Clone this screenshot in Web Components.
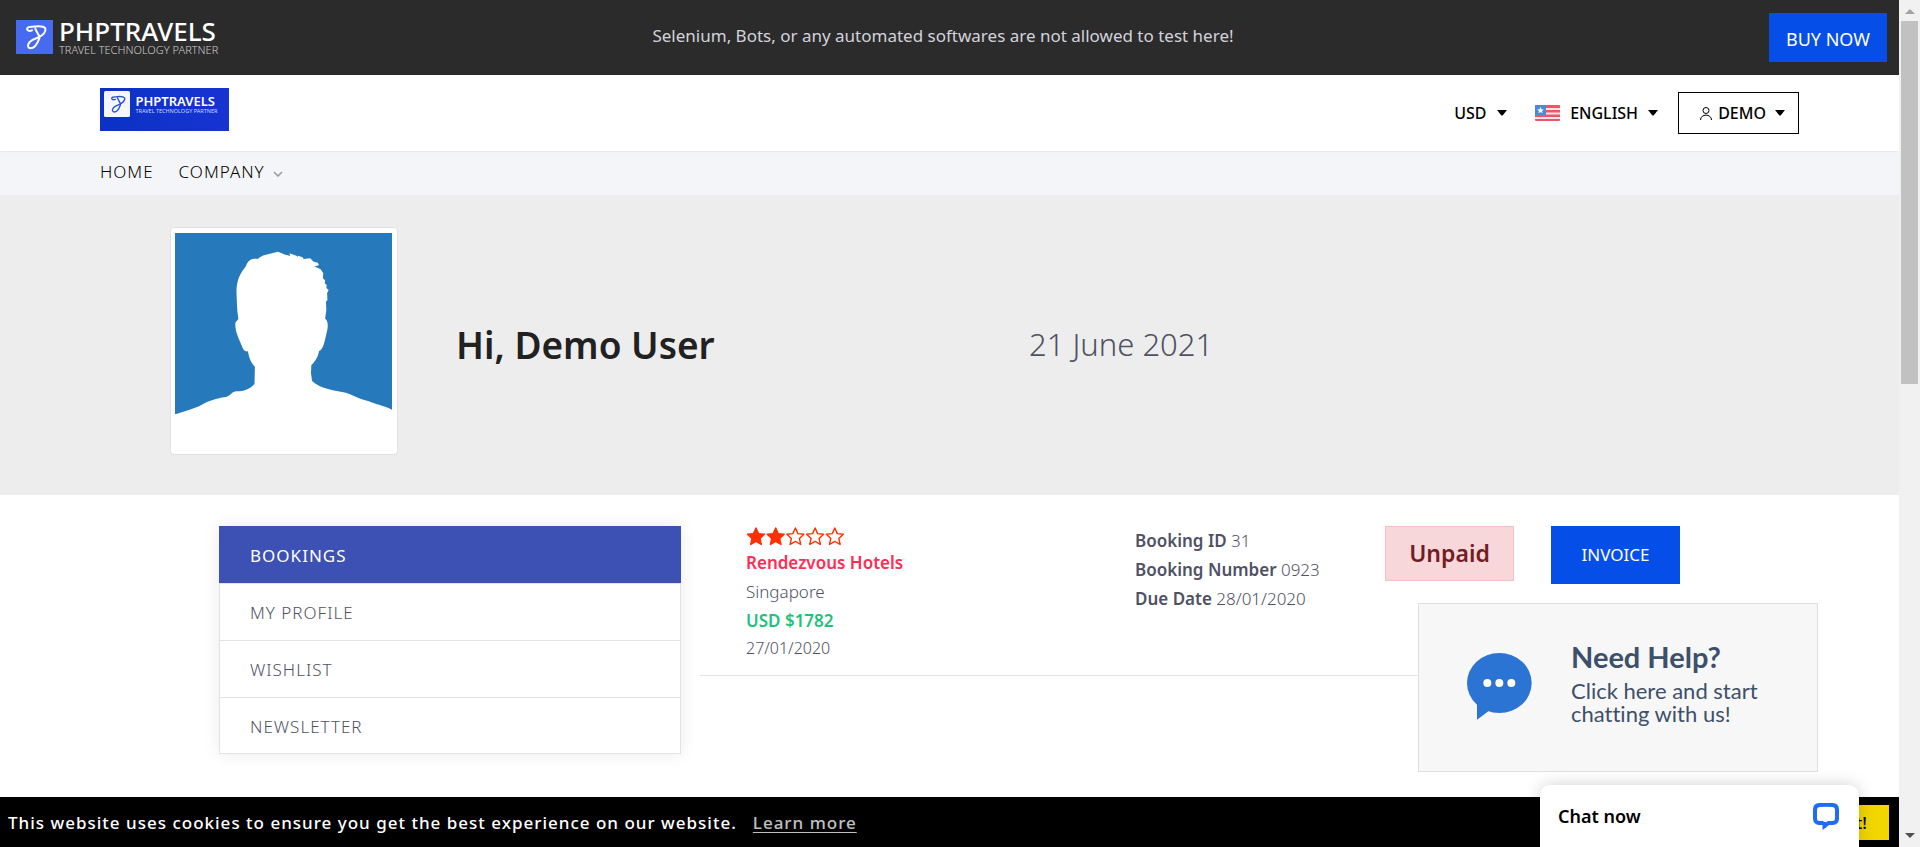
<!DOCTYPE html>
<html lang="en">
<head>
<meta charset="utf-8">
<title>My Account</title>
<style>
html, body { height: 100%; margin: 0; }
body { font: 17px/29px "Noto Sans", "Open Sans", sans-serif; color: #4f5164; background: #fff; }
</style>
</head>
<body>
<account-page></account-page>
<script>
const define = (name, html) => {
  const template = document.createElement('template');
  template.innerHTML = '<style>*{box-sizing:border-box}a{color:inherit;text-decoration:none}button{font:inherit;color:inherit;border:0;background:none;padding:0;cursor:pointer}svg{display:block}:host{display:block}</style>' + html;
  customElements.define(name, class extends HTMLElement {
    constructor() {
      super();
      this.attachShadow({ mode: 'open' }).append(template.content.cloneNode(true));
    }
  });
};

/* script letter used by both brand marks */
const mark = `<path d="M97 92C85 97 77 88 86 83C100 82 128 74 137 86C140 97 128 108 118 112M107 87C111 99 121 107 119 116C114 130 104 146 92 146C80 143 84 128 100 120C106 117 113 115 118 112" fill="none" stroke="currentColor" stroke-width="6" stroke-linecap="round" stroke-linejoin="round"/>`;

define('drop-caret', `
<style>:host{width:10px;height:6px}</style>
<svg width="10" height="6" viewBox="0 0 10 6"><path d="M0 0H10L6 5Q5 6 4 5Z" fill="#000"/></svg>`);

define('promo-bar', `
<style>
:host{display:grid;grid-template-columns:1fr auto 1fr;align-items:center;height:75px;padding:0 12px 0 16px;background:#2b2b2b;color:#d3d2dc}
.brand{display:flex;gap:6px;color:#fff;align-items:flex-start}
.brand span{display:block;font-size:26px;line-height:24px;font-weight:500}
.brand small{display:block;font-size:11px;line-height:13px;font-weight:300;color:#ccc}
.brand svg{margin-top:1px}
p{margin:0;padding:0 17px 4px 0}
.buy{justify-self:end;height:49px;padding:4px 17px 0;background:#064ee8;color:#fff;font-size:18px;line-height:45px}
</style>
<a class="brand" href="#">
<svg width="37" height="34" viewBox="49 61 111 102"><path d="M49 61H160V163H49Z" fill="#466af0"/>${mark}</svg>
<div><span>PHPTRAVELS</span><small>TRAVEL TECHNOLOGY PARTNER</small></div>
</a>
<p>Selenium, Bots, or any automated softwares are not allowed to test here!</p>
<a class="buy" href="#">BUY NOW</a>`);

define('site-header', `
<style>
:host{display:flex;justify-content:space-between;align-items:center;height:76px;padding:0 100px;background:#fff;color:#000;font-size:16px;line-height:24px;font-weight:500;position:relative;box-shadow:0 0 2px #00000024}
.logo{align-self:flex-start;margin-top:13px}
.tools{display:flex;align-items:center}
.pick{display:flex;align-items:center;gap:10px}
select{appearance:none;border:0;background:none;padding:0;margin:0;font:inherit;color:inherit;text-transform:uppercase}
.lang{margin:0 20px 0 28px}
.user{display:flex;align-items:center;height:42px;border:1px solid #000;padding:0 13px 0 21px;gap:9px}
.user span{display:flex;gap:6px;align-items:center}
</style>
<a class="logo" href="#" aria-label="PHPTRAVELS">
<svg width="129" height="43" viewBox="0 0 258 86">
<defs><linearGradient id="g"><stop stop-color="#0b32c4"/><stop offset="1" stop-color="#1733d2"/></linearGradient></defs>
<path d="M0 0H258V86H0Z" fill="url(#g)"/><rect x="8" y="6" width="52" height="52" rx="3" fill="#f4f7ff"/>
<g color="#2a4fd0"><svg x="8" y="6" width="52" height="52" viewBox="49 61 111 102">${mark}</svg></g>
<text x="71" y="36" font-size="26" font-weight="600" fill="#fff">PHPTRAVELS</text>
<text x="71" y="50" font-size="11" font-weight="400" fill="#cdd8ff">TRAVEL TECHNOLOGY PARTNER</text>
</svg></a>
<div class="tools">
<label class="pick"><select aria-label="Currency"><option>USD</option></select><drop-caret></drop-caret></label>
<label class="pick lang">
<svg width="25" height="16" viewBox="0 0 25 16"><rect width="25" height="16" rx="1" fill="#f05565"/><path d="M0 4H25M0 8.500H25M0 13H25" stroke="#f8e4e8" stroke-width="1.800"/><path d="M0 1Q0 0 1 0H11V10H0Z" fill="#4a89dc"/><path d="M5.500 2l1 2.200 2.300.2-1.800 1.500.6 2.300-2.100-1.200-2.100 1.200.6-2.300L2.200 4.400l2.300-.2z" fill="#fff"/></svg>
<select aria-label="Language"><option>English</option></select><drop-caret></drop-caret></label>
<button class="user" aria-haspopup="menu"><span><svg width="12" height="13" viewBox="0 0 12 13" fill="none" stroke="#000"><circle cx="6" cy="3.500" r="3"/><path d="M.5 13C.5 6.500 11.500 6.500 11.500 13"/></svg>DEMO</span><drop-caret></drop-caret></button>
</div>`);

define('main-nav', `
<style>
:host{display:flex;align-items:center;gap:25px;height:44px;padding:0 100px 4px;background:#f4f5f8;color:#000;letter-spacing:1px;font-weight:300}
.more{display:flex;align-items:center;gap:8px}
svg{margin-top:5px}
</style>
<a href="#">HOME</a>
<a class="more" href="#">COMPANY <svg width="10" height="6" viewBox="0 0 10 6"><path d="M1 1L5 5L9 1" fill="none" stroke="#999" stroke-width="1.500"/></svg></a>`);

define('user-hero', `
<style>
:host{display:grid;grid-template-columns:286fr 573fr 700fr;align-items:center;height:300px;padding:0 170px;background:#ededed}
.photo{align-self:start;margin-top:32px;width:228px;height:228px;border:1px solid #dee2e6;border-radius:4px;background:#fff;padding:5px 5px 4px 4px}
h1{margin:0;font-size:37px;line-height:48px;font-weight:600;color:#212121}
time{font-size:31px;line-height:48px;font-weight:300;padding-bottom:2px}
</style>
<div class="photo"><svg width="217" height="217" viewBox="65 69 565 651" preserveAspectRatio="none" role="img" aria-label="Profile photo">
<path d="M65 69H630V720H65Z" fill="#267abb"/>
<path fill="#fff" d="M65 613C85 606 110 596 125 590C142 580 155 568 200 560C213 554 213 545 225 544C245 543 257 540 272 522L273 470C262 458 257 440 255 424C246 426 242 417 239 408C232 385 222 370 222 342C222 333 229 331 230 326C226 300 226 270 225 240C227 210 233 192 250 168C254 152 264 144 280 147C295 132 315 131 333 125C345 130 353 135 365 138L363 130L383 138V143L385 137L397 142L400 147L417 145L426 155L437 158L440 166L428 169L444 178L451 190L450 205L456 211L455 220L460 225L459 234L465 240L461 250L462 270L458 275L459 300L456 326C465 333 463 353 461 362C456 385 452 420 440 423C438 440 430 455 420 465L419 490L422 513C440 532 462 539 510 548C525 553 535 563 570 574C585 582 605 586 630 599V720H65Z"/></svg></div>
<h1>Hi, Demo User</h1>
<time datetime="2021-06-21">21 June 2021</time>`);

define('side-menu', `
<style>
nav{border:1px solid #e3e3e3;box-shadow:0 0 16px #00000016;background:#fff}
::slotted(a){display:block;padding:16px 30px 15px;line-height:25px;letter-spacing:1px;font-weight:300;border-bottom:1px solid #e3e3e3}
::slotted(a[aria-current]){background:#3d50b3;color:#fff!important;font-weight:400;margin:-1px -1px 0;padding:17px 31px 15px}
::slotted(a:last-child){border-bottom:0;padding-bottom:14px}
</style>
<nav aria-label="Account"><slot></slot></nav>`);

define('star-rating', `
<style>:host{height:21px}svg{margin-top:1px}</style>
<svg width="99" height="19" viewBox="0 0 98 19" fill="none" stroke="#ff2f00" stroke-width="1.400" stroke-linejoin="round" role="img" aria-label="2 of 5 stars">
<defs><path id="s" d="M9.500 1L12 6.600L18 7.300L13.500 11.400L14.800 17.500L9.500 14.400L4.200 17.500L5.500 11.400L1 7.300L7 6.600Z"/></defs>
<use href="#s" fill="#ff2f00"/><use href="#s" x="19.700" fill="#ff2f00"/><use href="#s" x="39.400"/><use href="#s" x="59.100"/><use href="#s" x="78.800"/></svg>`);

define('booking-row', `
<style>
:host{display:grid;grid-template-columns:389fr 250fr 166fr 149fr;align-items:start;justify-items:start;padding:0 0 13px 46px;border-bottom:1px solid #e4e4e4;font-weight:300}
.name{display:block;color:#ff2c54;font-weight:600}
.price{color:#1fc27d;font-weight:600}
.date{font-size:16px;line-height:27px}
b{font-weight:600}
.state{width:129px;height:55px;border:1px solid #f5c0c7;background:#f8d7da;color:#721c24;font-size:23px;line-height:53px;font-weight:600;text-align:center}
.invoice{width:129px;height:58px;background:#064ee8;color:#fff;line-height:58px;font-weight:400;text-align:center}
</style>
<div><star-rating></star-rating><a class="name" href="#">Rendezvous Hotels</a><div>Singapore</div><div class="price">USD $1782</div><div class="date">27/01/2020</div></div>
<div><div><b>Booking ID</b> 31</div><div><b>Booking Number</b> 0923</div><div><b>Due Date</b> 28/01/2020</div></div>
<div class="state">Unpaid</div>
<button class="invoice">INVOICE</button>`);

define('account-body', `
<style>
:host{display:grid;grid-template-columns:462fr 1000fr;gap:19px;align-items:start;padding:31px 199px 0 219px}
</style>
<side-menu><a href="#" aria-current="page">BOOKINGS</a><a href="#">MY PROFILE</a><a href="#">WISHLIST</a><a href="#">NEWSLETTER</a></side-menu>
<booking-row></booking-row>`);

define('help-card', `
<style>
a{display:flex;align-items:center;gap:39px;width:400px;height:169px;padding:0 0 6px 48px;background:#f7f7f8;border:1px solid #dfdfdf;color:#3d5069;font:22px/23px Lato,sans-serif;font-variant-ligatures:none}
strong{display:block;font-size:29px;line-height:34px;margin-bottom:5px}
svg{margin-top:4px}
p{margin:0 0 4px}
</style>
<a href="#"><svg width="65" height="67" viewBox="0 0 195 201"><g fill="#2c74d3"><ellipse cx="97" cy="90" rx="97" ry="90"/><path d="M30 140V200L68 172Z"/></g><g fill="#fff"><circle cx="61" cy="90" r="12"/><circle cx="97" cy="90" r="12"/><circle cx="133" cy="90" r="12"/></g></svg>
<p><strong>Need Help?</strong>Click here and start<br>chatting with us!</p></a>`);

define('chat-tab', `
<style>
button{display:flex;justify-content:space-between;align-items:center;width:319px;height:62px;padding:0 20px 0 18px;border-radius:10px 10px 0 0;background:#fff;color:#000;font-size:18px;font-weight:600;box-shadow:0 0 16px #0000002e}
</style>
<button>Chat now<svg width="26" height="27" viewBox="0 0 26 27"><path d="M6.500 20Q2 20 2 15.500V6.500Q2 2.300 6.500 2Q13 1.500 19.500 2Q24 2.300 24 6.500V15.500Q24 20 19.500 20H15.500L11 23.500" fill="none" stroke="#1f6df5" stroke-width="4"/><path d="M5 18H10.500V22H5ZM9.500 19H13V24.500L9.500 27Z" fill="#1f6df5"/></svg></button>`);

define('cookie-bar', `
<style>
:host{display:flex;align-items:center;height:50px;padding:0 10px 0 8px;background:#000;color:#fff;letter-spacing:1px;font-weight:500}
a{opacity:.75;text-decoration:underline;margin-left:16px;text-underline-offset:3px}
button{margin-left:auto;height:35px;padding:0 22px;min-width:150px;background:#f1d600;color:#000;letter-spacing:0;text-align:right;font-weight:500}
</style>
<span>This website uses cookies to ensure you get the best experience on our website.</span>
<a href="#">Learn more</a>
<button>Got it!</button>`);

define('scroll-track', `
<style>
:host{display:flex;flex-direction:column;justify-content:space-between;width:21px;padding:9px 2px;background:#f1f1f1}
.thumb{height:363px;margin-top:7px;background:#c1c1c1}
svg{margin:0 auto}
.down{margin-top:auto}
</style>
<svg width="10" height="5" viewBox="0 0 10 5"><path d="M0 5H10L5 0Z" fill="#a3a3a3"/></svg>
<div class="thumb"></div>
<svg class="down" width="10" height="5" viewBox="0 0 10 5"><path d="M0 0H10L5 5Z" fill="#505050"/></svg>`);

define('account-page', `
<style>
:host{display:flex;height:100vh;overflow:hidden}
.view{flex:1;display:flex;flex-direction:column;position:relative}
.content{flex:1;overflow:hidden;min-height:0}
help-card{position:absolute;right:81px;bottom:75px}
chat-tab{position:absolute;right:40px;bottom:0}
</style>
<div class="view"><div class="content"><promo-bar></promo-bar><site-header></site-header><main-nav></main-nav><user-hero></user-hero><account-body></account-body></div>
<cookie-bar></cookie-bar><help-card></help-card><chat-tab></chat-tab></div>
<scroll-track aria-hidden="true"></scroll-track>`);
</script>
</body>
</html>
